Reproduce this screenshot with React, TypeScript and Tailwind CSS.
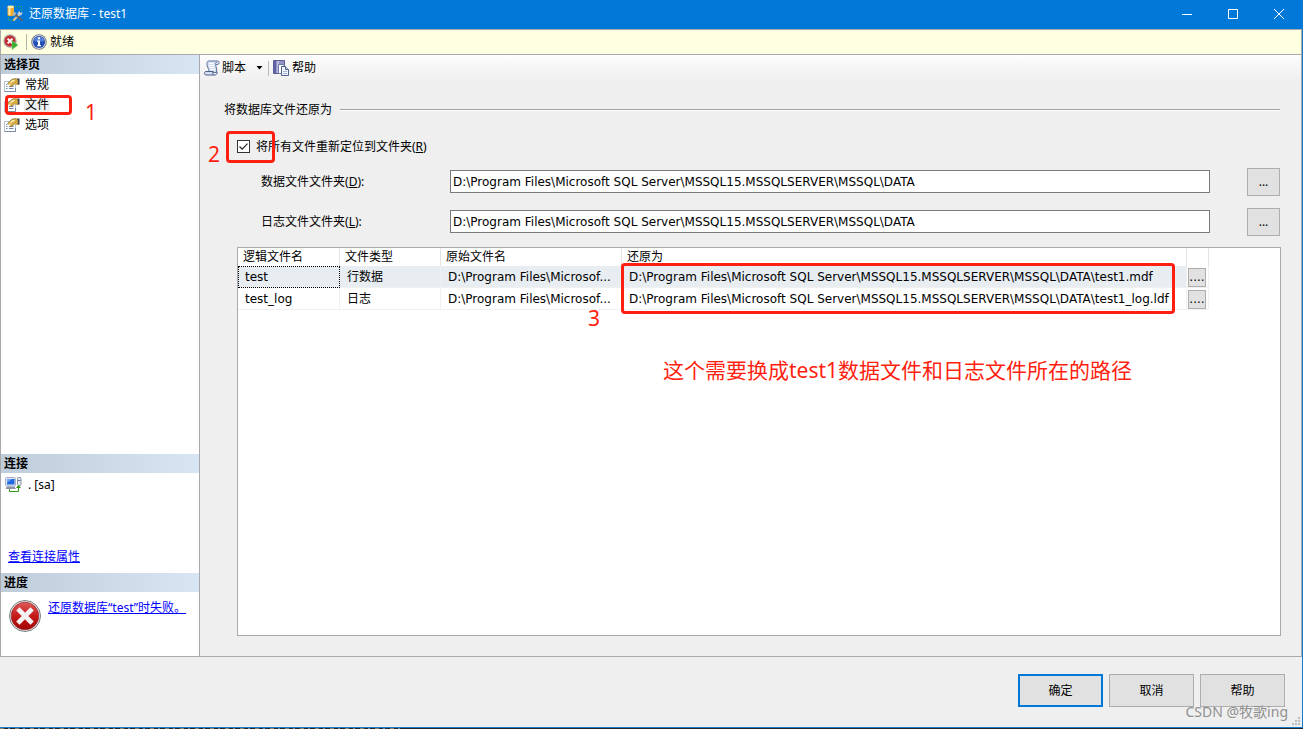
import { useState, type ReactNode } from 'react'

const DATA_FOLDER = 'D:\\Program Files\\Microsoft SQL Server\\MSSQL15.MSSQLSERVER\\MSSQL\\DATA'

const PAGES = ['常规', '文件', '选项']

const FILES = [
  {
    name: 'test',
    type: '行数据',
    original: 'D:\\Program Files\\Microsof...',
    target: `${DATA_FOLDER}\\test1.mdf`,
  },
  {
    name: 'test_log',
    type: '日志',
    original: 'D:\\Program Files\\Microsof...',
    target: `${DATA_FOLDER}\\test1_log.ldf`,
  },
]

function DatabaseIcon() {
  return (
    <svg width="17" height="17" viewBox="0 0 17 17" aria-hidden="true">
      <path d="M8 1.5h6.500v6M1.500 10v5.500h5" fill="none" stroke="#3fae49" strokeDasharray="1.5 1.5" />
      <path d="M0.5 1.500v8.500c0 1.500 6.500 1.500 6.500 0V1.500z" fill="#efac2f" />
      <path d="M1.500 2v8h2V2z" fill="#fde9a8" />
      <ellipse cx="3.700" cy="1.700" rx="3.200" ry="1.300" fill="#fff0b5" />
      <path d="M6.500 15.500l5.500-6" stroke="#e6c690" strokeWidth="2" />
      <path d="M7.500 9l8 6.500" stroke="#5b6272" strokeWidth="2" />
      <path d="M10.500 8l2-2 1 2 2-1-.5 2.500-3 1.500z" fill="#c9ced6" />
      <path d="M5 9.500l2.500-2.500 2 1-2 3z" fill="#aeb5c0" />
    </svg>
  )
}

function StopIcon() {
  return (
    <svg width="16" height="16" viewBox="0 0 16 16" aria-hidden="true">
      <circle cx="7" cy="7" r="6.700" fill="#b5a3a3" />
      <circle cx="7" cy="7" r="5.400" fill="#c02a30" />
      <path d="M4.600 4.600l4.800 4.800M9.400 4.600L4.600 9.400" stroke="#fff" strokeWidth="2" />
      <path d="M9 6.500l6 4.600-6 4.600z" fill="#35b12f" stroke="#8fce8a" strokeWidth="0.5" />
    </svg>
  )
}

function InfoIcon() {
  return (
    <svg width="16" height="16" viewBox="0 0 16 16" aria-hidden="true">
      <circle cx="8" cy="8" r="7.8" fill="#74777e" />
      <circle cx="8" cy="8" r="6.9" fill="#c8cede" />
      <circle cx="8" cy="8" r="6" fill="#2450b4" />
      <path d="M2.500 6.500a5.900 5.900 0 0 1 11 0Q8 9 2.500 6.500z" fill="#5580d8" />
      <path d="M7 3.200h2v2H7zM6.200 6.500H9v4.600h1v1.200H6.200v-1.200H7V7.700h-.8z" fill="#fff" />
    </svg>
  )
}

function PageIcon() {
  return (
    <svg width="16" height="14" viewBox="0 0 16 14" className="shrink-0" aria-hidden="true">
      <path d="M.5 3.500h11v10H.5z" fill="#fff" stroke="#b9c3d6" />
      <path d="M.5 13.500h11V10" fill="none" stroke="#7e88a0" />
      <path d="M2 6.500h1.500M2 8.500h1.500M2 10.500h1.500" stroke="#7286b4" />
      <path d="M5 8.500h4.500M5 10.500h4.500" stroke="#6c82b8" />
      <path d="M3.500 5.500L8 1.200 12.500.5 15 2v4.500l-2.500.5-2-1L7 9 5.500 7.500 8 4.500 4.500 7z" fill="#d6ab3c" />
      <path d="M5 5l3.500-2.800 3-.5-2.500 2.300z" fill="#fff3c4" />
      <path d="M3.500 5.500L8 1.200 12.500.5M7 9l3.500-3" fill="none" stroke="#7a6636" strokeWidth="0.7" />
      <path d="M13 .5h2.500v6H13.500l.5-3z" fill="#3e4550" />
    </svg>
  )
}

function ScriptIcon() {
  return (
    <svg width="16" height="16" viewBox="0 0 16 16" aria-hidden="true">
      <path d="M4.500 1h9c2.200 0 2.200 3.500 0 3.500h-1.700c-.5 2 1.700 4.500.7 8H4.500C6 9.500 2.500 7 3 3.500 3.100 2.200 3.500 1 4.500 1z" fill="#d6e0f2" stroke="#5d7099" />
      <path d="M1.800 11.500h7.400c-1 1.500-.5 3.500 1.300 3.500H2C0 15 0 11.500 1.800 11.500z" fill="#d5e0f2" stroke="#4d608a" />
      <path d="M12.500 11.500c1.500 1 .5 3.500-2 3.500" fill="none" stroke="#4d608a" />
      <path d="M5.500 3.500h4M5 5.500h5M6 7.500h4.500M6.500 9.500h4.500" stroke="#fff" />
      <path d="M11.700 4.500c-.8-1 0-2.500 1.300-2" fill="none" stroke="#7082a8" />
    </svg>
  )
}

function HelpIcon() {
  return (
    <svg width="16" height="16" viewBox="0 0 16 16" aria-hidden="true">
      <path d="M.5.5h11v13H.5z" fill="#9495c6" stroke="#5a5c98" />
      <path d="M1 1h2v12H1z" fill="#5f62a2" />
      <path d="M4 1h2v12H4z" fill="#b9badd" />
      <path d="M5.500 4.500h4.500l1.500 1.500v7.500h-6z" fill="#fff" stroke="#6a7ca6" />
      <path d="M8.500 6.500h4l3 3v6h-7z" fill="#f3f7fd" stroke="#52658e" />
      <path d="M12.500 6.500v3h3" fill="#cad6ea" stroke="#52658e" />
      <path d="M10 11.500h4M10 13.500h4" stroke="#a0b2d4" />
    </svg>
  )
}

function ServerIcon() {
  return (
    <svg width="17" height="16" viewBox="0 0 17 16" className="shrink-0" aria-hidden="true">
      <rect x="0.5" y="0.5" width="10" height="8.500" rx="1" fill="#dfe6f2" stroke="#a5b0c6" />
      <rect x="2" y="2" width="7.500" height="5.500" fill="#2168e0" />
      <path d="M2 2h5L2 6z" fill="#6fa4f5" />
      <path d="M.5 12l1.500-2.500h7.500L11 12z" fill="#8b94a6" />
      <rect x="12.500" y="0.5" width="3.500" height="8" rx="1" fill="#e3e7ef" stroke="#8b94a8" />
      <path d="M13 3.500h2.500" stroke="#6b7690" />
      <path d="M4.500 12v2.500h9V10" fill="none" stroke="#2e9310" />
      <path d="M11 11l2.500-3 2.500 3z" fill="#2e9310" />
    </svg>
  )
}

function ErrorIcon() {
  return (
    <svg width="32" height="32" viewBox="0 0 32 32" className="shrink-0" aria-hidden="true">
      <defs>
        <linearGradient id="errorFill" x1="0" y1="0" x2="0" y2="1">
          <stop offset="0" stopColor="#e05a5a" />
          <stop offset="0.5" stopColor="#c51a1a" />
          <stop offset="1" stopColor="#a30505" />
        </linearGradient>
      </defs>
      <circle cx="16" cy="16" r="15.500" fill="#e6e6e6" stroke="#7d7d7d" />
      <circle cx="16" cy="16" r="13.800" fill="url(#errorFill)" stroke="#8c2020" strokeWidth="0.6" />
      <path d="M10.500 10.500l11 11M21.500 10.500l-11 11" stroke="#f3f3f3" strokeWidth="4.600" strokeLinecap="square" />
    </svg>
  )
}

function PanelTitle({ children }: { children: ReactNode }) {
  return (
    <h2 className="h-[19px] bg-linear-to-r from-[#bfcddb] to-[#d8e6f3] pl-[3px] text-xs leading-[19px] font-bold">
      {children}
    </h2>
  )
}

interface FolderRowProps {
  id: string
  label: string
  mnemonic: string
}

function FolderRow({ id, label, mnemonic }: FolderRowProps) {
  return (
    <div className="flex h-7 items-center">
      <label htmlFor={id} className="w-[189px] shrink-0">
        {label}(<u>{mnemonic}</u>):
      </label>
      <input
        id={id}
        type="text"
        defaultValue={DATA_FOLDER}
        className="mb-px h-[23px] min-w-0 flex-1 border border-[#7a7a7a] bg-white px-[2px] font-['DejaVu_Sans','Noto_Sans_CJK_SC',sans-serif] outline-none"
      />
      <button
        type="button"
        aria-label={`浏览${label}`}
        className="ml-[37px] h-7 w-[33px] border border-[#adadad] bg-[#e1e1e1]"
      >
        ...
      </button>
    </div>
  )
}

export default function App() {
  const [page, setPage] = useState('文件')
  const [relocate, setRelocate] = useState(true)

  return (
    <div className="flex min-h-dvh flex-col bg-[#efefef] font-['Noto_Sans','Noto_Sans_CJK_SC',sans-serif] text-xs text-black">
      <div className="flex flex-1 flex-col border-r border-b border-[#1979ca]">
        <header className="flex h-[29px] items-center bg-[#0078d7] pb-[2px] pl-[7px] text-white">
          <DatabaseIcon />
          <h1 className="ml-[5px] flex-1">还原数据库 - test1</h1>
          <button type="button" aria-label="最小化" className="flex h-full w-[46px] items-center justify-center">
            <svg width="10" height="10" viewBox="0 0 10 10" stroke="#fff">
              <path d="M0 5.500h10" />
            </svg>
          </button>
          <button type="button" aria-label="最大化" className="flex h-full w-[46px] items-center justify-center">
            <svg width="10" height="10" viewBox="0 0 10 10" fill="none" stroke="#fff">
              <path d="M.5.5h9v9h-9z" />
            </svg>
          </button>
          <button type="button" aria-label="关闭" className="flex h-full w-[46px] items-center justify-center">
            <svg width="10" height="10" viewBox="0 0 10 10" stroke="#fff">
              <path d="M0 0l10 10M10 0L0 10" />
            </svg>
          </button>
        </header>

        <div className="flex h-[26px] items-center border border-[#a9a9ad] bg-[#ffffe1] pb-px pl-[2px]">
          <StopIcon />
          <span className="ml-[7px] h-4 w-px bg-[#b5b5a5]" />
          <span className="ml-1">
            <InfoIcon />
          </span>
          <span className="ml-[3px]">就绪</span>
        </div>

        <div className="flex flex-1 border-x border-b border-[#a9a9ad]">
          <aside className="flex w-[199px] shrink-0 flex-col border-r border-[#a9a9ad] bg-white">
            <PanelTitle>选择页</PanelTitle>
            <nav className="relative flex-1 pt-px">
              {PAGES.map((item) => (
                <button
                  key={item}
                  type="button"
                  onClick={() => setPage(item)}
                  className="flex h-5 w-full items-center pl-[3px]"
                >
                  <PageIcon />
                  <span className={page === item ? 'ml-1 bg-[#efefef] px-px' : 'ml-1 px-px'}>{item}</span>
                </button>
              ))}
              <span className="absolute top-[21px] left-1 h-5 w-[67px] rounded-sm border-3 border-[#ff1f10]" />
              <span className="absolute top-[24px] left-[84px] text-[21px] leading-7 text-[#ff1f10]">1</span>
            </nav>

            <PanelTitle>连接</PanelTitle>
            <div className="flex h-[100px] flex-col justify-between pt-1 pb-2">
              <div className="flex items-center gap-[6px] pl-1">
                <ServerIcon />
                <span>. [sa]</span>
              </div>
              <a href="#connection" className="pl-[7px] text-[#0000ff] underline">
                查看连接属性
              </a>
            </div>

            <PanelTitle>进度</PanelTitle>
            <div className="flex h-16 items-start gap-[7px] pt-2 pl-2">
              <ErrorIcon />
              <a href="#progress" className="text-[#0000ff] underline">
                还原数据库“test”时失败。
              </a>
            </div>
          </aside>

          <main className="flex min-w-0 flex-1 flex-col">
            <div className="flex h-[26px] items-center bg-linear-to-b from-[#fdfdfd] to-[#efefef] pl-1">
              <button type="button" className="flex items-center gap-[2px]">
                <ScriptIcon />
                脚本
                <svg width="7" height="4" viewBox="0 0 7 4" className="ml-2">
                  <path d="M.5 0h6L3.500 3.500z" />
                </svg>
              </button>
              <span className="ml-[5px] h-[15px] w-px bg-[#b8b8bc]" />
              <button type="button" className="ml-1 flex items-center gap-[3px]">
                <HelpIcon />
                帮助
              </button>
            </div>

            <section className="flex flex-1 flex-col pt-5 pr-5 pb-5 pl-6">
              <div className="flex h-[18px] items-center gap-2 pr-px">
                <h2>将数据库文件还原为</h2>
                <span className="h-[2px] flex-1 border-t border-[#a0a0a0] bg-white" />
              </div>

              <div className="relative mt-[19px] h-[17px] pl-[13px]">
                <label className="flex h-[17px] w-fit items-center gap-[6px]">
                  <span className="relative h-[13px] w-[13px]">
                    <input
                      type="checkbox"
                      checked={relocate}
                      onChange={(e) => setRelocate(e.target.checked)}
                      className="peer block h-[13px] w-[13px] appearance-none border border-[#333] bg-white"
                    />
                    <svg
                      viewBox="0 0 13 13"
                      className="pointer-events-none absolute inset-0 hidden peer-checked:block"
                      fill="none"
                      stroke="#222"
                      strokeWidth="1.200"
                    >
                      <path d="M2.500 6.500l2.700 2.700 5.300-5.500" />
                    </svg>
                  </span>
                  <span>
                    将所有文件重新定位到文件夹(<u>R</u>)
                  </span>
                </label>
                <span className="absolute top-[-7px] left-[2px] h-8 w-[49px] rounded-sm border-3 border-[#ff1f10]" />
                <span className="absolute top-[2px] -left-4 text-[21px] leading-7 text-[#ff1f10]">2</span>
              </div>

              <div className="mt-[13px] flex flex-col gap-3 pr-px pl-[37px]">
                <FolderRow id="data-folder" label="数据文件文件夹" mnemonic="D" />
                <FolderRow id="log-folder" label="日志文件文件夹" mnemonic="L" />
              </div>

              <div className="relative mt-[11px] ml-[13px] flex-1 border border-[#a9a9ad] bg-white">
                <table className="w-[971px] table-fixed border-separate border-spacing-0 text-left">
                  <colgroup>
                    <col className="w-[102px]" />
                    <col className="w-[101px]" />
                    <col className="w-[181px]" />
                    <col className="w-[565px]" />
                    <col className="w-[22px]" />
                  </colgroup>
                  <thead>
                    <tr className="h-[18px] leading-[18px] *:border-r *:border-[#e3e3e3] *:p-0 *:pl-[5px] *:font-normal">
                      <th>逻辑文件名</th>
                      <th>文件类型</th>
                      <th>原始文件名</th>
                      <th>还原为</th>
                      <th aria-label="浏览" />
                    </tr>
                  </thead>
                  <tbody className="font-['DejaVu_Sans','Noto_Sans_CJK_SC',sans-serif]">
                    {FILES.map((file, i) => (
                      <tr
                        key={file.name}
                        className={
                          i === 0
                            ? 'h-[22px] bg-[#e8edf2] leading-5 whitespace-nowrap *:border-r *:border-b *:border-[#f0f0f0] *:p-0 *:pl-[7px]'
                            : 'h-[22px] leading-5 whitespace-nowrap *:border-r *:border-b *:border-[#f0f0f0] *:p-0 *:pl-[7px]'
                        }
                      >
                        <td className={i === 0 ? 'outline-1 -outline-offset-1 outline-black outline-dotted' : ''}>
                          {file.name}
                        </td>
                        <td>{file.type}</td>
                        <td>{file.original}</td>
                        <td>{file.target}</td>
                        <td className="bg-white pt-px! pl-px!">
                          <button
                            type="button"
                            aria-label={`浏览 ${file.name}`}
                            className="block h-[19px] w-[18px] border border-[#adadad] bg-[#e1e1e1] text-center leading-4"
                          >
                            ....
                          </button>
                        </td>
                      </tr>
                    ))}
                  </tbody>
                </table>
                <span className="absolute top-[15px] left-[383px] h-[51px] w-[554px] rounded-sm border-3 border-[#ff1f10]" />
                <span className="absolute top-[56px] left-[350px] text-[21px] leading-7 text-[#ff1f10]">3</span>
                <p className="absolute top-[108px] left-[425px] text-[21px] leading-7 whitespace-nowrap text-[#ff1f10]">
                  这个需要换成test1数据文件和日志文件所在的路径
                </p>
              </div>
            </section>
          </main>
        </div>

        <footer className="relative flex h-[70px] justify-end gap-[6px] pt-[17px] pr-[17px]">
          <button type="button" className="h-[33px] w-[85px] border-2 border-[#0078d7] bg-[#e1e1e1]">
            确定
          </button>
          <button type="button" className="h-[33px] w-[85px] border border-[#adadad] bg-[#e1e1e1]">
            取消
          </button>
          <button type="button" className="h-[33px] w-[85px] border border-[#adadad] bg-[#e1e1e1]">
            帮助
          </button>
          <span className="absolute top-[43px] right-[14px] text-sm leading-6 text-[#8f8f8f]">CSDN @牧歌ing</span>
          <svg width="8" height="8" viewBox="0 0 8 8" fill="#bdbdbd" className="absolute right-[2px] bottom-[2px]">
            <path d="M6 0h2v2H6zM3 3h2v2H3zM6 3h2v2H6zM0 6h2v2H0zM3 6h2v2H3zM6 6h2v2H6z" />
          </svg>
        </footer>
      </div>
      {/* sliver of the console window behind the dialog */}
      <div className="h-px bg-[#262626]">
        <div className="h-px w-[404px] bg-[repeating-linear-gradient(90deg,#8a7a6a_0_4px,#262626_4px_8px,#6f8496_8px_10px,#262626_10px_15px)]" />
      </div>
    </div>
  )
}
